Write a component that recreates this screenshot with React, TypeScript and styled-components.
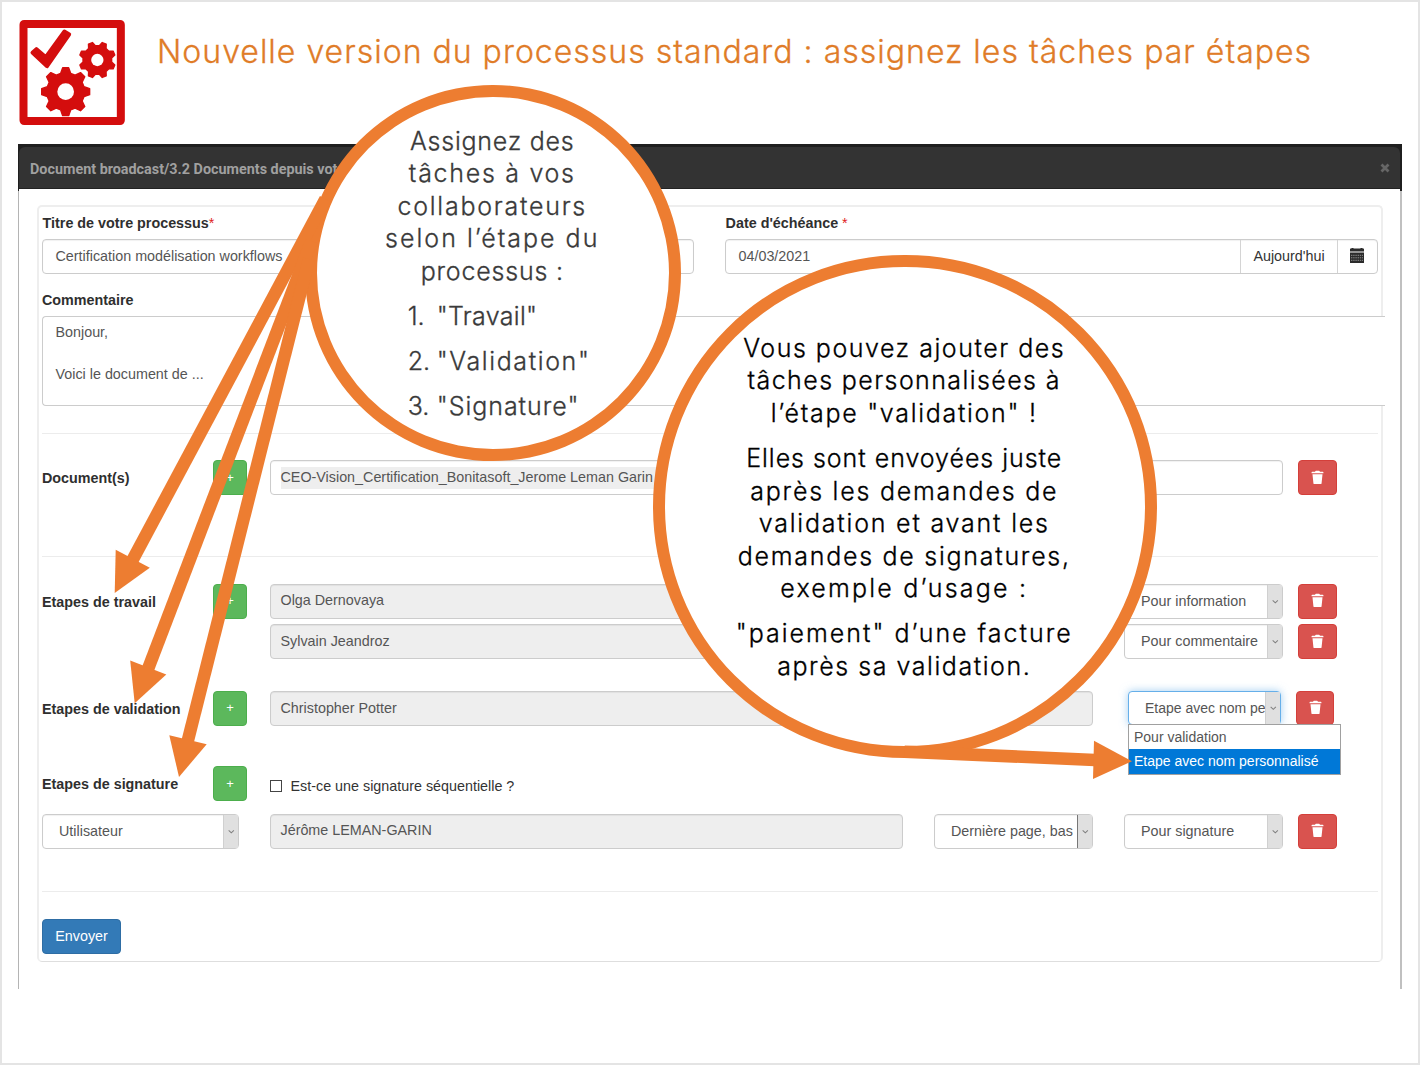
import React from "react";
import styled, { createGlobalStyle, css } from "styled-components";

const ORANGE = "#ed7d31";
const RED = "#d40d0d";

const GlobalStyle = createGlobalStyle`
  *, *::before, *::after { box-sizing: border-box; }
  body { margin: 0; background: #fff; }
`;

/* ---------- Slide ---------- */

const Slide = styled.main`
  position: relative;
  width: 1420px;
  height: 1065px;
  overflow: hidden;
  border: 2px solid #e4e4e4;
  background: #fff;
  font-family: "Liberation Sans", Arial, sans-serif;
  font-size: 14.33px;
  color: #555;
`;

const SlideHeader = styled.header`
  display: flex;
  align-items: flex-start;
  gap: 27px;
  height: 142px;
  padding: 13px 0 0 13px;
`;

const Logo = styled.svg`
  display: block;
  width: 115px;
  height: 115px;
`;

const SlideTitle = styled.h1`
  margin: 17px 0 0;
  font: 300 32px/40px Inter, sans-serif;
  letter-spacing: 1.01px;
  color: #e07c28;
  -webkit-text-stroke: 0.3px #e07c28;
  white-space: nowrap;
`;

/* ---------- Modal window ---------- */

const Modal = styled.section`
  width: 1384px;
  height: 845px;
  margin-left: 16px;
`;

const ModalTop = styled.div`
  height: 47px;
  padding: 3px 0 0;
  background: linear-gradient(#1f1f1f 45px, transparent 45px);
  border: solid #1f1f1f;
  border-width: 0 2px 0 1px;
`;

const ModalBar = styled.div`
  display: flex;
  align-items: center;
  justify-content: space-between;
  height: 42px;
  padding: 0 10px 0 11px;
  border-radius: 6px 6px 0 0;
  border-bottom: 1px solid #222;
  background: #333;
  color: #a0a0a0;
`;

const ModalTitle = styled.span`
  padding-top: 4px;
  font: 700 14.36px/20px Roboto, sans-serif;
`;

const ModalBody = styled.div`
  height: 798px;
  padding: 14px 17px 0 18px;
  border-left: 1px solid #b4b4b4;
  border-right: 2px solid #c0c0c0;
`;

const Panel = styled.form`
  height: 757px;
  width: 1346px;
  padding: 0 3px;
  border: 2px solid #eeeeee;
  border-bottom: 1px solid #dedede;
  border-radius: 5px;
`;

/* ---------- Form parts ---------- */

const Label = styled.label`
  font-weight: 700;
  color: #2f2f2f;
  white-space: nowrap;
`;

const Required = styled.span`
  color: #e02020;
  font-weight: 400;
`;

const TopFields = styled.div`
  display: grid;
  grid-template-columns: 652px 653px;
  column-gap: 31px;
`;

const Field = styled.div`
  display: flex;
  flex-direction: column;
  ${Label} {
    height: 32px;
    line-height: 33px;
    padding-left: 0.6px;
  }
`;

const box = css`
  border: 1px solid #ccc;
  border-radius: 4px;
  background: #fff;
  box-shadow: inset 0 1px 1px rgba(0, 0, 0, 0.06);
`;

const TextBox = styled.div<{ $w?: number; $left?: number; $muted?: boolean; $pad?: number; $lift?: boolean }>`
  ${box}
  display: flex;
  align-items: center;
  flex: none;
  height: 35px;
  width: ${(p) => (p.$w ? `${p.$w}px` : "auto")};
  margin-left: ${(p) => p.$left ?? 0}px;
  padding-left: ${(p) => p.$pad ?? 9.5}px;
  padding-bottom: ${(p) => (p.$lift ? 1 : 0)}px;
  background: ${(p) => (p.$muted ? "#eee" : "#fff")};
  line-height: 17px;
  white-space: nowrap;
  overflow: hidden;
`;

const FileName = styled.span`
  padding: 2px 6px 3px 0;
  background: #eee;
`;

const DateGroup = styled.div`
  ${box}
  display: grid;
  grid-template-columns: 1fr 97px 40px;
  height: 35px;
  line-height: 33px;
`;

const DateValue = styled.span`
  padding-left: 12.5px;
`;

const DateAddon = styled.span`
  display: flex;
  align-items: center;
  justify-content: center;
  border-left: 1px solid #d4d4d4;
  color: #333;
  > svg {
    margin: -2px 2px 0 0;
  }
`;

const CommentLabel = styled(Label)`
  display: block;
  height: 42px;
  padding-top: 18px;
  line-height: 16px;
`;

const Comment = styled.div`
  position: relative;
  width: 1343px;
  height: 90px;
  padding: 5px 12.5px;
  border: 1px solid #ccc;
  border-right: 0;
  border-radius: 4px 0 0 4px;
  background: #fff;
  line-height: 20.8px;
  white-space: pre-line;
`;

const Rule = styled.hr<{ $top: number; $bottom: number }>`
  height: 1px;
  margin: ${(p) => p.$top}px 0 ${(p) => p.$bottom}px;
  border: 0;
  background: #ececec;
`;

const Row = styled.div<{ $after?: number }>`
  display: flex;
  height: 35px;
  margin-bottom: ${(p) => p.$after ?? 0}px;
`;

const Lead = styled.div`
  display: flex;
  flex: none;
  width: 228px;
  ${Label} {
    width: 171px;
    line-height: 37px;
  }
`;

const AddButton = styled.button`
  width: 34px;
  height: 35px;
  padding: 0 0 1px;
  border: 1px solid #4cae4c;
  border-radius: 4px;
  background: #5cb85c;
  color: #fff;
  font: 13px "Liberation Sans", Arial, sans-serif;
`;

const DeleteBox = styled.button<{ $near?: boolean }>`
  display: grid;
  place-items: center;
  width: ${(p) => (p.$near ? 38 : 39)}px;
  height: ${(p) => (p.$near ? 34 : 35)}px;
  margin-left: 15px;
  padding: 0 0 1px;
  border: 1px solid #d43f3a;
  border-radius: 4px;
  background: #d9534f;
`;

const SelectBox = styled.div<{ $w: number; $left?: number; $focus?: boolean; $edge?: boolean }>`
  ${box}
  display: flex;
  flex: none;
  position: relative;
  width: ${(p) => p.$w}px;
  height: ${(p) => (p.$focus ? 34 : 35)}px;
  margin-left: ${(p) => p.$left ?? 0}px;
  padding-left: 16px;
  line-height: 33px;
  ${(p) =>
    p.$focus &&
    css`
      border-color: #66afe9;
      box-shadow: 0 0 8px rgba(102, 175, 233, 0.6);
      font-size: 14px;
    `}
  > svg {
    border-left: 1px solid ${(p) => (p.$edge ? "#777" : "#d0d0d0")};
  }
`;

const SelectText = styled.span`
  flex: 1;
  min-width: 0;
  white-space: nowrap;
`;

const SelectArrow = styled.svg`
  flex: none;
  width: 15px;
  height: 100%;
  background: #e0e0e0;
`;

const Options = styled.div`
  position: absolute;
  z-index: 3;
  top: 32px;
  left: -1px;
  width: 213px;
  border: 1px solid #a0a0a0;
  background: #fff;
`;

const Option = styled.div<{ $active?: boolean }>`
  height: 24.5px;
  padding-left: 5px;
  line-height: 24px;
  background: ${(p) => (p.$active ? "#0078d7" : "#fff")};
  color: ${(p) => (p.$active ? "#fff" : "#555")};
`;

const CheckLine = styled.label`
  display: flex;
  align-items: center;
  gap: 8.5px;
  padding-top: 5px;
  color: #333;
`;

const CheckSquare = styled.span`
  width: 12px;
  height: 12px;
  border: 1px solid #444;
`;

const SendButton = styled.button`
  display: block;
  width: 79px;
  height: 35px;
  padding: 0 0 1px;
  border: 1px solid #2e6da4;
  border-radius: 4px;
  background: #337ab7;
  color: #fff;
  font: 14.33px "Liberation Sans", Arial, sans-serif;
`;

/* ---------- Callouts drawn over the form ---------- */

const Bubble = styled.aside<{ $x: number; $y: number; $w: number; $h: number; $ink: string }>`
  position: absolute;
  z-index: 4;
  left: ${(p) => p.$x - 2}px;
  top: ${(p) => p.$y - 2}px;
  width: ${(p) => p.$w}px;
  height: ${(p) => p.$h}px;
  display: flex;
  flex-direction: column;
  align-items: center;
  justify-content: center;
  gap: 12.4px;
  padding-top: 2px;
  border: 12px solid ${ORANGE};
  border-radius: 50%;
  background: #fff;
  font: 300 25px/32.6px Inter, sans-serif;
  color: ${(p) => p.$ink};
  -webkit-text-stroke: 0.3px ${(p) => p.$ink};
`;

const Paragraph = styled.p`
  margin: 0 1px 0 0;
  text-align: center;
`;

const Line = styled.span<{ $track: number }>`
  display: block;
  letter-spacing: ${(p) => p.$track}px;
  white-space: nowrap;
`;

const Steps = styled.ol`
  display: grid;
  row-gap: 12.4px;
  width: 182px;
  margin: 0 0 0 12px;
  padding: 0;
  list-style: none;
`;

const Step = styled.li`
  display: grid;
  grid-template-columns: 29px 1fr;
`;

const Arrows = styled.svg`
  position: absolute;
  z-index: 5;
  left: -2px;
  top: -2px;
  width: 1420px;
  height: 1065px;
  pointer-events: none;
`;

/* ---------- Drawings ---------- */

function gear(cx: number, cy: number, outer: number, root: number, tip: number, base: number, turn: number) {
  const pts: string[] = [];
  for (let i = 0; i < 8; i++) {
    const a = ((i * 45 + turn) * Math.PI) / 180;
    const at = (r: number, side: number) =>
      `${(cx + r * Math.sin(a) + side * Math.cos(a)).toFixed(1)},${(cy - r * Math.cos(a) + side * Math.sin(a)).toFixed(1)}`;
    pts.push(at(root, -base / 2), at(outer, -tip / 2), at(outer, tip / 2), at(root, base / 2));
  }
  return pts.join(" ");
}

const LogoMark = () => (
  <Logo viewBox="0 0 345 345">
    <rect x="25.5" y="27" width="292" height="291" rx="2" fill="#fff" stroke={RED} strokeWidth="24" strokeLinejoin="round" />
    <polygon points="64,102 92,126 148,49 163,58 96,154 52,113" fill={RED} stroke={RED} strokeWidth="11" strokeLinejoin="round" />
    <polygon points={gear(152, 230, 72, 55, 18, 30, 0)} fill={RED} stroke={RED} strokeWidth="4" strokeLinejoin="round" />
    <circle cx="152" cy="230" r="25" fill="#fff" />
    <polygon points={gear(247, 135, 54, 42, 13, 22, 22.5)} fill={RED} stroke={RED} strokeWidth="4" strokeLinejoin="round" />
    <circle cx="247" cy="135" r="18.5" fill="#fff" />
  </Logo>
);

const Trash = () => (
  <svg width="13" height="15" viewBox="0 0 14 15">
    <path d="M0.6 2.2 Q0.6 1.4 1.4 1.4 H4.4 Q4.6 .3 5.4 .3 H8.6 Q9.4 .3 9.6 1.4 H12.6 Q13.4 1.4 13.4 2.2 V3 H0.6Z M1.6 4 H12.4 L11.4 13.7 Q11.3 14.6 10.4 14.6 H3.6 Q2.7 14.6 2.6 13.7Z" fill="#fff" />
  </svg>
);

const Calendar = () => (
  <svg width="14" height="15" viewBox="0 0 14 15">
    <path d="M0 1.2 Q0 .6 .6 .6 H1.5 V0 H3.5 V.6 H10.5 V0 H12.5 V.6 H13.4 Q14 .6 14 1.2 V3.6 H0Z M0 4.6 H14 V15 H0Z" fill="#2b2b2b" />
    <path d="M1 7.3H13M1 9.8H13M1 12.3H13" stroke="#aaa" strokeWidth=".8" strokeDasharray="1.4 .8" />
  </svg>
);

const Cross = () => (
  <svg width="10" height="10" viewBox="0 0 10 10">
    <path d="M1.5 1.5L8.5 8.5M8.5 1.5L1.5 8.5" stroke="#666" strokeWidth="2.8" />
  </svg>
);

type SelectProps = { w: number; left?: number; focus?: boolean; edge?: boolean; text: string; children?: React.ReactNode };
const Select = ({ w, left, focus, edge, text, children }: SelectProps) => (
  <SelectBox $w={w} $left={left} $focus={focus} $edge={edge}>
    <SelectText>{text}</SelectText>
    <SelectArrow viewBox="0 0 15 33">
      <path d="M5 15.3L7.8 18L10.6 15.3" fill="none" stroke="#808080" strokeWidth="1.1" />
    </SelectArrow>
    {children}
  </SelectBox>
);

const Delete = ({ near }: { near?: boolean }) => (
  <DeleteBox type="button" $near={near} aria-label="Supprimer">
    <Trash />
  </DeleteBox>
);

const RowLead = ({ text }: { text?: string }) => (
  <Lead>
    {text && (
      <>
        <Label>{text}</Label>
        <AddButton type="button">+</AddButton>
      </>
    )}
  </Lead>
);

const intro: [string, number][] = [
  ["Assignez des", 0.75],
  ["tâches à vos", 1.7],
  ["collaborateurs", 1.74],
  ["selon l’étape du", 2],
  ["processus :", 0.8],
];

const steps: [string, string, number][] = [
  ["1.", '"Travail"', 0.3],
  ["2.", '"Validation"', 1.6],
  ["3.", '"Signature"', 0.95],
];

const custom: [string, number][][] = [
  [
    ["Vous pouvez ajouter des", 1.52],
    ["tâches personnalisées à", 1.4],
    ['l’étape "validation" !', 1.7],
  ],
  [
    ["Elles sont envoyées juste", 0.96],
    ["après les demandes de", 1.77],
    ["validation et avant les", 1.79],
    ["demandes de signatures,", 1.73],
    ["exemple d’usage :", 2.2],
  ],
  [
    ['"paiement" d’une facture', 2],
    ["après sa validation.", 1.54],
  ],
];

const Lines = ({ items }: { items: [string, number][] }) => (
  <Paragraph>
    {items.map(([text, track]) => (
      <Line key={text} $track={track}>
        {text}
      </Line>
    ))}
  </Paragraph>
);

export default function App() {
  return (
    <Slide>
      <GlobalStyle />
      <SlideHeader>
        <LogoMark />
        <SlideTitle>Nouvelle version du processus standard : assignez les tâches par étapes</SlideTitle>
      </SlideHeader>

      <Modal>
        <ModalTop>
          <ModalBar>
            <ModalTitle>Document broadcast/3.2 Documents depuis vot</ModalTitle>
            <Cross />
          </ModalBar>
        </ModalTop>
        <ModalBody>
          <Panel>
            <TopFields>
              <Field>
                <Label>
                  Titre de votre processus<Required>*</Required>
                </Label>
                <TextBox $pad={12.5} $lift>Certification modélisation workflows</TextBox>
              </Field>
              <Field>
                <Label>
                  Date d'échéance <Required>*</Required>
                </Label>
                <DateGroup>
                  <DateValue>04/03/2021</DateValue>
                  <DateAddon>Aujourd'hui</DateAddon>
                  <DateAddon>
                    <Calendar />
                  </DateAddon>
                </DateGroup>
              </Field>
            </TopFields>
            <CommentLabel>Commentaire</CommentLabel>
            <Comment>{"Bonjour,\n\nVoici le document de ..."}</Comment>

            <Rule $top={27} $bottom={26} />
            <Row>
              <RowLead text="Document(s)" />
              <TextBox $w={1013}>
                <FileName>CEO-Vision_Certification_Bonitasoft_Jerome Leman Garin</FileName>
              </TextBox>
              <Delete />
            </Row>

            <Rule $top={61} $bottom={26.6} />
            <Row $after={5.8}>
              <RowLead text="Etapes de travail" />
              <TextBox $w={823} $muted $lift>Olga Dernovaya</TextBox>
              <Select w={159} left={31} text="Pour information" />
              <Delete />
            </Row>
            <Row $after={31.6}>
              <RowLead />
              <TextBox $w={823} $muted>Sylvain Jeandroz</TextBox>
              <Select w={159} left={31} text="Pour commentaire" />
              <Delete />
            </Row>
            <Row $after={40.4}>
              <RowLead text="Etapes de validation" />
              <TextBox $w={823} $muted>Christopher Potter</TextBox>
              <Select w={153} left={35} focus text="Etape avec nom pe">
                <Options>
                  <Option>Pour validation</Option>
                  <Option $active>Etape avec nom personnalisé</Option>
                </Options>
              </Select>
              <Delete near />
            </Row>
            <Row $after={12.6}>
              <RowLead text="Etapes de signature" />
              <CheckLine>
                <CheckSquare />
                Est-ce une signature séquentielle ?
              </CheckLine>
            </Row>
            <Row>
              <Select w={197} text="Utilisateur" />
              <TextBox $w={633} $left={31} $muted $lift>Jérôme LEMAN-GARIN</TextBox>
              <Select w={159} left={31} edge text="Dernière page, bas" />
              <Select w={159} left={31} text="Pour signature" />
              <Delete />
            </Row>

            <Rule $top={42} $bottom={27} />
            <SendButton type="button">Envoyer</SendButton>
          </Panel>
        </ModalBody>
      </Modal>

      <Bubble $x={305} $y={84.5} $w={375.5} $h={376} $ink="#3a3a3a">
        <Lines items={intro} />
        <Steps>
          {steps.map(([num, text, track]) => (
            <Step key={num}>
              <span>{num}</span>
              <Line $track={track}>{text}</Line>
            </Step>
          ))}
        </Steps>
      </Bubble>

      <Bubble $x={653} $y={254.5} $w={503.5} $h={503.5} $ink="#000">
        {custom.map((items) => (
          <Lines key={items[0][0]} items={items} />
        ))}
      </Bubble>

      <Arrows viewBox="0 0 1420 1065">
        <g stroke={ORANGE} strokeWidth="12.6" fill="none">
          <path d="M325.5 199L132 561" />
          <path d="M311.5 241L148 669" />
          <path d="M309 259L187.5 742" />
          <path d="M904.5 751.7L1095 760" />
        </g>
        <g fill={ORANGE}>
          <path d="M114.7 593L115.7 549.7L149.8 567.7Z" />
          <path d="M134.7 703.3L130.2 660.5L166.3 674.4Z" />
          <path d="M179 777L169.3 735.2L206.7 744.2Z" />
          <path d="M1132 761.2L1094 740.7L1093 779Z" />
        </g>
      </Arrows>
    </Slide>
  );
}
